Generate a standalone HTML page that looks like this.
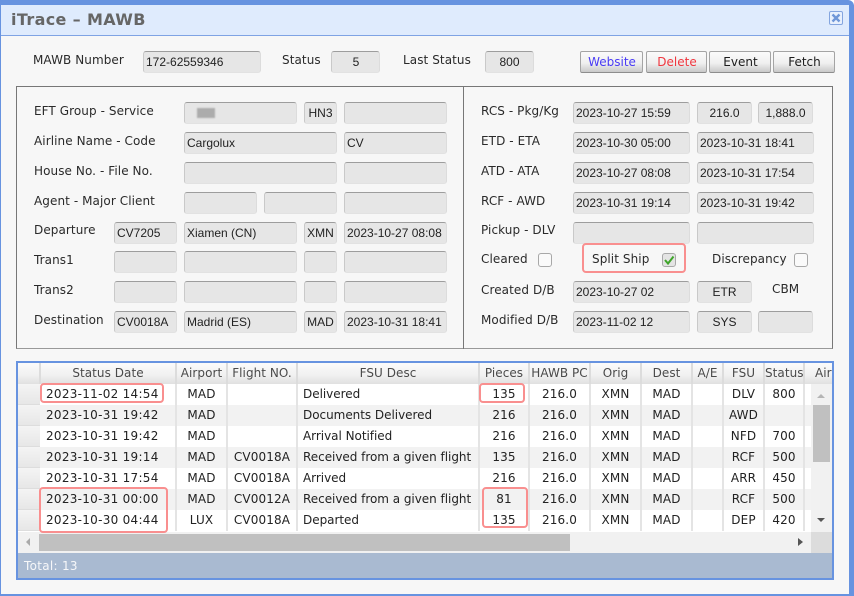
<!DOCTYPE html>
<html><head><meta charset="utf-8">
<style>
*{box-sizing:border-box}
html,body{margin:0;padding:0;width:854px;height:596px;overflow:hidden;background:#fff}
body{font:12px "DejaVu Sans","Liberation Sans",sans-serif;color:#2a2a2a;position:relative}
#w{position:absolute;left:0;top:0;width:854px;height:596px;background:#6793e0;border-radius:0 6px 0 0}
#p{position:absolute;left:1px;top:5px;width:848px;height:589px;background:#f7f7f7}
#t{position:absolute;left:1px;top:5px;width:848px;height:31px;background:#dfebfd;border-bottom:1px solid #7fa3e4}
#tt{position:absolute;left:11px;top:10px;font:bold 16px/20px "DejaVu Sans",sans-serif;color:#666;letter-spacing:.35px}
#x{position:absolute;left:829px;top:11px;width:14px;height:14px;border:1px solid #84a5df;border-radius:2px;background:#e8f0fd}
#box{position:absolute;left:16px;top:86px;width:817px;height:263px;border:1px solid #777;border-bottom-color:#999}
#div{position:absolute;left:463px;top:86px;width:1px;height:263px;background:#777}
.l{position:absolute;white-space:nowrap;line-height:16px;height:16px;letter-spacing:.08px}
.i{position:absolute;height:22px;background:#e6e6e6;border:1px solid #e2e2e2;border-top:1px solid #9d9d9d;border-left-color:#c9c9c9;border-right-color:#dcdcdc;border-radius:3px;font:12px/20px "Liberation Sans",sans-serif;color:#222;padding:0 2px;white-space:nowrap;overflow:hidden}
.c{text-align:center}
.b{position:absolute;top:51px;height:22px;border:1px solid #a4a4a4;border-bottom-color:#8d8d8d;border-radius:2px;background:linear-gradient(#fbfbfb,#f0f0f0 55%,#c9c9c9);text-align:center;line-height:20px;color:#1c1c1c;padding-left:1px}
.cb{position:absolute;top:253px;width:14px;height:14px;border:1px solid #a8a8a8;border-radius:3px;background:#fafafa}
.r{position:absolute;border:2px solid #f98f8f;border-radius:4px}
#g{position:absolute;left:16px;top:361px;width:818px;height:219px;border:2px solid #6793e0;background:#fff;overflow:hidden}
#gh{position:absolute;left:0;top:0;width:814px;height:21px;overflow:hidden;background:linear-gradient(#fbfbfb,#f0f0f0 60%,#e0e0e0)}
#gb{position:absolute;left:0;top:21px;width:793px;height:147px;overflow:hidden;background:#fff}
table{border-collapse:collapse;table-layout:fixed;width:853px;font:12px/21px "DejaVu Sans",sans-serif;letter-spacing:.14px}
td,th{padding:0;height:21px;text-align:center;white-space:nowrap;overflow:hidden;font-weight:normal;border-right:2px solid #e4e4e4}
th{color:#4a4a4a;border-right:2px solid #dcdcdc;letter-spacing:.05px}
td{color:#222}
tr.a td{background:#f2f2f2}
td.n{background:linear-gradient(#f4f4f4,#e6e6e6)!important;border-right:0;box-shadow:inset 0 -1px #ddd}
td.d{text-align:left;padding-left:5px;letter-spacing:-.03px}
#gb td:nth-child(2){text-align:left;padding-left:6px;letter-spacing:.28px}
#vs{position:absolute;left:793px;top:21px;width:21px;height:148px;background:#f1f1f1}
#vt{position:absolute;left:2px;top:21px;width:17px;height:57px;background:#c0c0c0}
#hs{position:absolute;left:0;top:169px;width:793px;height:21px;background:#f1f1f1}
#ht{position:absolute;left:21px;top:2px;width:531px;height:17px;background:#c0c0c0}
#co{position:absolute;left:793px;top:169px;width:21px;height:21px;background:#dcdcdc}
#tot{position:absolute;left:0;top:190px;width:814px;height:25px;background:#a9bad1;color:#f6f7f9;line-height:26px;padding-left:6px;letter-spacing:.3px}
</style></head><body>
<div id="w"></div><div id="p"></div><div id="t"></div>
<div id="tt">iTrace – MAWB</div>
<div id="x"><svg width="12" height="12" viewBox="0 0 12 12" style="display:block"><path d="M2.5 2.5L9.5 9.5M9.5 2.5L2.5 9.5" stroke="#6f97d8" stroke-width="2.4"/></svg></div>

<div class="l" style="left:33px;top:52px">MAWB Number</div>
<div class="i" style="left:143px;top:51px;width:118px">172-62559346</div>
<div class="l" style="left:282px;top:52px">Status</div>
<div class="i c" style="left:331px;top:51px;width:49px;padding-left:3px">5</div>
<div class="l" style="left:403px;top:52px">Last Status</div>
<div class="i c" style="left:485px;top:51px;width:49px">800</div>
<div class="b" style="left:580px;width:63px;color:#4a3cf5">Website</div>
<div class="b" style="left:646px;width:61px;color:#f0373f">Delete</div>
<div class="b" style="left:709px;width:62px">Event</div>
<div class="b" style="left:773px;width:62px">Fetch</div>

<div id="box"></div><div id="div"></div>

<div class="l" style="left:34px;top:103px">EFT Group - Service</div>
<div class="i" style="left:184px;top:102px;width:113px"></div>
<div style="position:absolute;left:197px;top:108px;width:18px;height:10px;background:#acacac;filter:blur(.8px)"></div>
<div class="i c" style="left:304px;top:102px;width:33px">HN3</div>
<div class="i" style="left:344px;top:102px;width:103px"></div>

<div class="l" style="left:34px;top:133px">Airline Name - Code</div>
<div class="i" style="left:184px;top:132px;width:153px">Cargolux</div>
<div class="i" style="left:344px;top:132px;width:103px">CV</div>

<div class="l" style="left:34px;top:163px">House No. - File No.</div>
<div class="i" style="left:184px;top:162px;width:153px"></div>
<div class="i" style="left:344px;top:162px;width:103px"></div>

<div class="l" style="left:34px;top:193px">Agent - Major Client</div>
<div class="i" style="left:184px;top:192px;width:73px"></div>
<div class="i" style="left:264px;top:192px;width:73px"></div>
<div class="i" style="left:344px;top:192px;width:103px"></div>

<div class="l" style="left:34px;top:222px">Departure</div>
<div class="i" style="left:114px;top:222px;width:63px">CV7205</div>
<div class="i" style="left:184px;top:222px;width:113px">Xiamen (CN)</div>
<div class="i c" style="left:304px;top:222px;width:33px">XMN</div>
<div class="i" style="left:344px;top:222px;width:103px">2023-10-27 08:08</div>

<div class="l" style="left:34px;top:252px">Trans1</div>
<div class="i" style="left:114px;top:251px;width:63px"></div>
<div class="i" style="left:184px;top:251px;width:113px"></div>
<div class="i" style="left:304px;top:251px;width:33px"></div>
<div class="i" style="left:344px;top:251px;width:103px"></div>

<div class="l" style="left:34px;top:282px">Trans2</div>
<div class="i" style="left:114px;top:281px;width:63px"></div>
<div class="i" style="left:184px;top:281px;width:113px"></div>
<div class="i" style="left:304px;top:281px;width:33px"></div>
<div class="i" style="left:344px;top:281px;width:103px"></div>

<div class="l" style="left:34px;top:312px">Destination</div>
<div class="i" style="left:114px;top:311px;width:63px">CV0018A</div>
<div class="i" style="left:184px;top:311px;width:113px">Madrid (ES)</div>
<div class="i c" style="left:304px;top:311px;width:33px">MAD</div>
<div class="i" style="left:344px;top:311px;width:103px">2023-10-31 18:41</div>

<div class="l" style="left:481px;top:103px">RCS - Pkg/Kg</div>
<div class="i" style="left:573px;top:102px;width:117px">2023-10-27 15:59</div>
<div class="i c" style="left:697px;top:102px;width:55px">216.0</div>
<div class="i c" style="left:758px;top:102px;width:55px">1,888.0</div>

<div class="l" style="left:481px;top:133px">ETD - ETA</div>
<div class="i" style="left:573px;top:132px;width:117px">2023-10-30 05:00</div>
<div class="i" style="left:697px;top:132px;width:117px">2023-10-31 18:41</div>

<div class="l" style="left:481px;top:163px">ATD - ATA</div>
<div class="i" style="left:573px;top:162px;width:117px">2023-10-27 08:08</div>
<div class="i" style="left:697px;top:162px;width:117px">2023-10-31 17:54</div>

<div class="l" style="left:481px;top:193px">RCF - AWD</div>
<div class="i" style="left:573px;top:192px;width:117px">2023-10-31 19:14</div>
<div class="i" style="left:697px;top:192px;width:117px">2023-10-31 19:42</div>

<div class="l" style="left:481px;top:222px">Pickup - DLV</div>
<div class="i" style="left:573px;top:222px;width:117px"></div>
<div class="i" style="left:697px;top:222px;width:117px"></div>

<div class="l" style="left:481px;top:251px">Cleared</div>
<div class="cb" style="left:538px"></div>
<div class="r" style="left:582px;top:243px;width:104px;height:30px"></div>
<div class="l" style="left:592px;top:251px">Split Ship</div>
<div class="cb" style="left:662px;background:#e4e4e4"><svg width="12" height="12" viewBox="0 0 12 12" style="display:block"><path d="M2 6L5 9.5L10.5 2.5" fill="none" stroke="#3fa52a" stroke-width="2"/></svg></div>
<div class="l" style="left:712px;top:251px">Discrepancy</div>
<div class="cb" style="left:794px"></div>

<div class="l" style="left:481px;top:282px">Created D/B</div>
<div class="i" style="left:573px;top:281px;width:117px">2023-10-27 02</div>
<div class="i c" style="left:697px;top:281px;width:55px">ETR</div>
<div class="l" style="left:772px;top:281px">CBM</div>

<div class="l" style="left:481px;top:312px">Modified D/B</div>
<div class="i" style="left:573px;top:311px;width:117px">2023-11-02 12</div>
<div class="i c" style="left:697px;top:311px;width:55px">SYS</div>
<div class="i" style="left:758px;top:311px;width:55px"></div>

<div id="g">
<div id="gh"><table><colgroup><col style="width:22px"><col style="width:136px"><col style="width:51px"><col style="width:70px"><col style="width:182px"><col style="width:50px"><col style="width:61px"><col style="width:51px"><col style="width:51px"><col style="width:31px"><col style="width:41px"><col style="width:40px"><col style="width:67px"></colgroup>
<tr><th></th><th>Status Date</th><th>Airport</th><th>Flight NO.</th><th>FSU Desc</th><th>Pieces</th><th>HAWB PC</th><th>Orig</th><th>Dest</th><th>A/E</th><th>FSU</th><th>Status</th><th style="text-align:left;padding-left:10px">Air</th></tr></table></div>
<div id="gb"><table><colgroup><col style="width:22px"><col style="width:136px"><col style="width:51px"><col style="width:70px"><col style="width:182px"><col style="width:50px"><col style="width:61px"><col style="width:51px"><col style="width:51px"><col style="width:31px"><col style="width:41px"><col style="width:40px"><col style="width:67px"></colgroup>
<tr><td class="n"></td><td>2023-11-02 14:54</td><td>MAD</td><td></td><td class="d">Delivered</td><td>135</td><td>216.0</td><td>XMN</td><td>MAD</td><td></td><td>DLV</td><td>800</td><td></td></tr>
<tr class="a"><td class="n"></td><td>2023-10-31 19:42</td><td>MAD</td><td></td><td class="d">Documents Delivered</td><td>216</td><td>216.0</td><td>XMN</td><td>MAD</td><td></td><td>AWD</td><td></td><td></td></tr>
<tr><td class="n"></td><td>2023-10-31 19:42</td><td>MAD</td><td></td><td class="d">Arrival Notified</td><td>216</td><td>216.0</td><td>XMN</td><td>MAD</td><td></td><td>NFD</td><td>700</td><td></td></tr>
<tr class="a"><td class="n"></td><td>2023-10-31 19:14</td><td>MAD</td><td>CV0018A</td><td class="d">Received from a given flight</td><td>135</td><td>216.0</td><td>XMN</td><td>MAD</td><td></td><td>RCF</td><td>500</td><td></td></tr>
<tr><td class="n"></td><td>2023-10-31 17:54</td><td>MAD</td><td>CV0018A</td><td class="d">Arrived</td><td>216</td><td>216.0</td><td>XMN</td><td>MAD</td><td></td><td>ARR</td><td>450</td><td></td></tr>
<tr class="a"><td class="n"></td><td>2023-10-31 00:00</td><td>MAD</td><td>CV0012A</td><td class="d">Received from a given flight</td><td>81</td><td>216.0</td><td>XMN</td><td>MAD</td><td></td><td>RCF</td><td>500</td><td></td></tr>
<tr><td class="n"></td><td>2023-10-30 04:44</td><td>LUX</td><td>CV0018A</td><td class="d">Departed</td><td>135</td><td>216.0</td><td>XMN</td><td>MAD</td><td></td><td>DEP</td><td>420</td><td></td></tr>
</table></div>
<div id="vs"><div id="vt"></div>
<svg width="21" height="148" style="position:absolute;left:0;top:0"><path d="M6 14L14 14L10 10Z" fill="#b5b5b5"/><path d="M6 134L14 134L10 138Z" fill="#555"/></svg></div>
<div id="hs"><div id="ht"></div>
<svg width="793" height="21" style="position:absolute;left:0;top:0"><path d="M12 6L12 14L8 10Z" fill="#aaa"/><path d="M780 6L780 14L785 10Z" fill="#555"/></svg></div>
<div id="co"></div>
<div id="tot">Total: 13</div>
</div>

<div class="r" style="left:40px;top:383px;width:124px;height:20px"></div>
<div class="r" style="left:479px;top:383px;width:46px;height:20px"></div>
<div class="r" style="left:39px;top:487px;width:129px;height:46px"></div>
<div class="r" style="left:482px;top:487px;width:46px;height:41px"></div>
</body></html>
